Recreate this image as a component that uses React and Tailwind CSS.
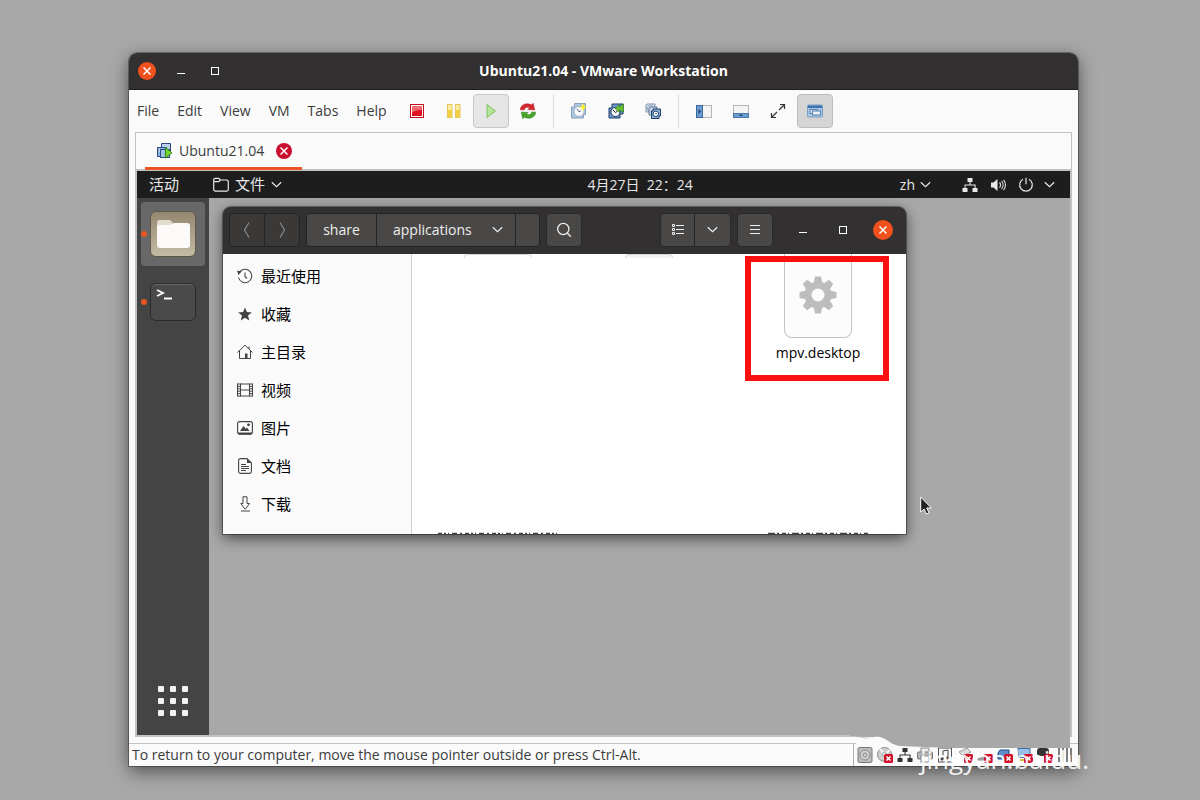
import { useState } from "react";

const menuItems = ["File", "Edit", "View", "VM", "Tabs", "Help"];

/* ---------- Shared glyphs ---------- */

const CloseGlyph = () => (
  <svg className="w-2 h-2" viewBox="0 0 8 8" stroke="white" strokeWidth="1.5" fill="none">
    <path d="M0.5 0.5l7 7M7.5 0.5l-7 7" />
  </svg>
);

const Chevron = () => (
  <svg className="w-[11px] h-[11px]" viewBox="0 0 11 11" stroke="currentColor" strokeWidth="1.2" fill="none">
    <path d="M0.8 3.2l4.7 4.4 4.7-4.4" />
  </svg>
);

const Badge = () => (
  <g>
    <rect x="7" y="7" width="9" height="9" rx="1.5" fill="#d01028" />
    <path d="M9.500 9.500l4 4M13.500 9.500l-4 4" stroke="#fff" strokeWidth="1.6" />
  </g>
);

/* ---------- Toolbar ---------- */

const toolGroups = [
  [
    {
      label: "Power off",
      icon: (
        <>
          <rect x="1.5" y="1.5" width="13" height="13" fill="#fff" stroke="#c4081c" />
          <rect x="3" y="3" width="10" height="10" fill="#e01022" />
          <path d="M3 3h10v3.5C9 7 6 7.500 3 9.500z" fill="#f26a70" />
        </>
      ),
    },
    {
      label: "Suspend",
      icon: (
        <>
          <rect x="1.500" y="1.500" width="4.500" height="13" fill="#f3d23f" stroke="#e6c562" />
          <rect x="9.500" y="1.500" width="4.500" height="13" fill="#f3d23f" stroke="#e6c562" />
          <path d="M2 2h3.500v5H2zM10 2h3.500v5H10z" fill="#fbeb9a" />
        </>
      ),
    },
    {
      label: "Start",
      pressed: "bg-[#e6e6e6] border-[#c6c6c6]",
      icon: <path d="M4 1.500L12.500 8 4 14.500z" fill="#b4e296" stroke="#7fc167" strokeLinejoin="round" />,
    },
    {
      label: "Restart",
      icon: (
        <>
          <path d="M.3 6.800C.5 2 6-.8 11.500 1.800L13.300.2l1.400 6.800-7-.5 1.900-1.700C7 3.700 4.500 4.500 4.200 7z" fill="#d8262c" stroke="#a8282c" strokeWidth="0.500" />
          <path d="M15.700 9.200C15.500 14 10 16.800 4.500 14.200l-1.800 1.600L1.300 9l7 .5-1.900 1.700c2.600 1.100 5.100.3 5.400-2.200z" fill="#46a62c" stroke="#387f26" strokeWidth="0.500" />
        </>
      ),
    },
  ],
  [
    {
      label: "Take snapshot",
      icon: (
        <>
          <path d="M3.500.5h11v11h-2v3.500H.5V4h3z" fill="#a9c6e2" stroke="#8aa0b8" />
          <circle cx="8" cy="8.500" r="5" fill="#f7fafc" stroke="#a3b4c5" />
          <path d="M6 6l2 2.800 2-1" stroke="#5e6c7a" fill="none" />
          <path d="M12 0l1 3 3 .8-2.700 1.400L12.500 8l-1.600-2.500L8 5l2.500-1.500z" fill="#fff02c" />
        </>
      ),
    },
    {
      label: "Revert snapshot",
      icon: (
        <>
          <path d="M4 1h11v10h-3v4H1V5h3z" fill="#6e9bd0" stroke="#1c3d68" />
          <circle cx="7.500" cy="9" r="4.600" fill="#eef3f7" stroke="#23395a" />
          <path d="M5 7l2.500 2.500L9.500 8" stroke="#222" fill="none" />
          <path d="M7 5.500l4.500-4V4l4-3v8l-4-2v2.500z" fill="#67bf31" stroke="#2d7c20" strokeWidth="0.700" />
        </>
      ),
    },
    {
      label: "Manage snapshots",
      icon: (
        <>
          <path d="M2 1h8v8H1V2z" fill="#dce7f2" stroke="#7c91ad" />
          <circle cx="5.500" cy="5.500" r="3" fill="#fff" stroke="#7c91ad" />
          <path d="M5 4h7v8H4V5z" fill="#c6d7ea" stroke="#5e7799" />
          <path d="M8 6h7.500v7H14v2.500H6.500V8H8z" fill="#8db0d8" stroke="#1c3d68" />
          <circle cx="10.800" cy="10.800" r="2.700" fill="#fff" stroke="#1c3d68" />
          <path d="M10 10l1 1 1-1" stroke="#1c3d68" strokeWidth="0.800" fill="none" />
        </>
      ),
    },
  ],
  [
    {
      label: "Show library",
      icon: (
        <>
          <rect x="0.500" y="2.500" width="15" height="12" fill="#f4f4f4" stroke="#b2b6bb" />
          <rect x="0.500" y="2.500" width="6" height="12" fill="#6b9bd1" stroke="#3c69a0" />
          <path d="M2.500 6l2.500 2.500-2.500 2.500z" fill="#1d4272" />
        </>
      ),
    },
    {
      label: "Show thumbnail bar",
      icon: (
        <>
          <rect x="0.500" y="2.500" width="15" height="12" fill="#f4f4f4" stroke="#b2b6bb" />
          <rect x="0.500" y="10.500" width="15" height="4" fill="#6b9bd1" stroke="#4c76a8" />
          <path d="M6 13l2-2 2 2z" fill="#1d4272" />
        </>
      ),
    },
    {
      label: "Full screen",
      icon: (
        <path d="M9 7l5-5M10 1.500h4.500V6M7 9l-5 5M1.500 10v4.500H6" stroke="#333" strokeWidth="1.200" fill="none" />
      ),
    },
    {
      label: "Unity",
      pressed: "bg-[#d5d5d5] border-[#bdbdbd]",
      icon: (
        <>
          <rect x="0.500" y="2" width="15" height="12" rx="1" fill="#a9c8e6" stroke="#7b9dc0" />
          <path d="M1 2.500h14v2.500H1z" fill="#3d71ac" />
          <rect x="3" y="6.500" width="7" height="4" fill="#dce9f5" stroke="#5580ae" />
          <rect x="5.500" y="8" width="8" height="4" fill="#eaf2f9" stroke="#5580ae" />
        </>
      ),
    },
  ],
];

const ToolButton = ({ label, pressed, icon }) => (
  <button
    aria-label={label}
    className={`w-9 h-[34px] rounded border flex items-center justify-center ${pressed || "border-transparent"}`}
  >
    <svg className="w-4 h-4" viewBox="0 0 16 16">{icon}</svg>
  </button>
);

const VmIcon = () => (
  <svg className="w-4 h-4" viewBox="0 0 16 16">
    <path d="M4.500.5h9v9h-9z" fill="#b9d0ec" stroke="#2a4a80" />
    <path d="M.5 4.500h9v9h-9z" fill="#8fb2de" stroke="#2a4a80" />
    <path d="M2 6h6v1H2zM2 8h6v1H2z" fill="#d7e5f5" />
    <rect x="3.500" y="6.500" width="9" height="8" fill="#9dbde4" stroke="#2a4a80" />
    <path d="M8.500 4.500l6.500 5.300-6.500 5.300z" fill="#78d52c" stroke="#2f8a1c" />
  </svg>
);

/* ---------- Files sidebar ---------- */

const places = [
  {
    name: "最近使用",
    icon: (
      <>
        <path d="M2.300 4.500A6.700 6.700 0 1 1 1.500 9.500M8 4.500v4l2 2" fill="none" stroke="currentColor" strokeWidth="1.100" />
        <path d="M0 2.800l4.800.5L1.500 7z" fill="currentColor" />
      </>
    ),
  },
  {
    name: "收藏",
    icon: <path d="M8 1.500l1.900 4.600 5 .3-3.900 3.200 1.300 4.900L8 11.800l-4.300 2.700L5 9.600 1.100 6.400l5-.3z" fill="currentColor" />,
  },
  {
    name: "主目录",
    icon: (
      <>
        <path d="M.5 8.500L8 1.200l7.500 7.300M2.500 7v7.500h11V7M12 5V2.500" fill="none" stroke="currentColor" />
        <path d="M8 9.500h2.500v5H8z" fill="currentColor" />
      </>
    ),
  },
  {
    name: "视频",
    icon: (
      <>
        <path d="M.5 1.500v13M15.500 1.500v13M3.500 1.500v13M12.500 1.500v13M3.500 2h9M3.500 8h9M3.500 14h9" fill="none" stroke="currentColor" />
        <path d="M.5 2h3M.5 4.400h3M.5 6.800h3M.5 9.200h3M.5 11.600h3M.5 14h3M12.500 2h3M12.500 4.400h3M12.500 6.800h3M12.500 9.200h3M12.500 11.600h3M12.500 14h3" stroke="currentColor" />
      </>
    ),
  },
  {
    name: "图片",
    icon: (
      <>
        <rect x=".6" y="1.600" width="14.800" height="12.500" rx="2" fill="none" stroke="currentColor" strokeWidth="1.100" />
        <path d="M1 12.500h14v.7l-1.500 1.300h-11L1 13.200zM3 11l3.500-5 2.300 2.800L10 7.500l2.500 3.500z" fill="currentColor" />
        <circle cx="11.500" cy="4.800" r="1.400" fill="currentColor" />
      </>
    ),
  },
  {
    name: "文档",
    icon: (
      <>
        <path d="M3.500.6H10l4.400 4.400v8.500a1.900 1.900 0 0 1-1.900 1.900h-9a1.900 1.900 0 0 1-1.900-1.900v-11A1.900 1.900 0 0 1 3.500.6z" fill="none" stroke="currentColor" strokeWidth="1.100" />
        <path d="M10 .6V5h4.400z" fill="currentColor" />
        <path d="M4 6.500h5M4 8.500h8M4 10.500h8M4 12.500h5" stroke="currentColor" />
      </>
    ),
  },
  {
    name: "下载",
    icon: <path d="M6 .8h4v6.700h2.500L8.500 13h-.7L3.800 7.500H6zM4 15h9" fill="none" stroke="currentColor" />,
  },
];

/* ---------- Status tray ---------- */

const devices = [
  {
    name: "Hard disk",
    icon: (
      <>
        <rect x="1" y="0.500" width="14" height="15" rx="1.500" fill="#bdbdbd" stroke="#777" />
        <circle cx="8" cy="8" r="5" fill="#d2d2d2" stroke="#888" />
        <circle cx="8" cy="8" r="2" fill="none" stroke="#888" />
      </>
    ),
  },
  {
    name: "CD/DVD",
    icon: (
      <>
        <circle cx="7.500" cy="7.500" r="7" fill="#cfcfcf" stroke="#8a8a8a" />
        <path d="M7.500 7.500L3 2M7.500 7.500L13 3" stroke="#f5f5f5" strokeWidth="2" />
        <circle cx="7.500" cy="7.500" r="2" fill="#fff" stroke="#999" />
        <Badge />
      </>
    ),
  },
  {
    name: "Network adapter",
    icon: <path d="M5.500 1h5v4H8.600v2.500h5V11H15.500v4h-5v-4h2V8.600h-9V11h2v4h-5v-4h2V7.500h5V5H5.500z" fill="#333" />,
  },
  {
    name: "Printer",
    icon: (
      <>
        <rect x="4" y="1" width="8" height="5" fill="#eee" stroke="#888" />
        <rect x="0.500" y="5" width="15" height="7" rx="1" fill="#b5b5b5" stroke="#777" />
        <rect x="4" y="9" width="8" height="6" fill="#fff" stroke="#888" />
      </>
    ),
  },
  {
    name: "Sound card",
    icon: (
      <>
        <rect x="1.500" y="1" width="13" height="14" fill="#f7f7f7" stroke="#555" />
        <path d="M6 12V4l5-1v8" fill="none" stroke="#444" />
        <circle cx="5" cy="12" r="1.500" fill="#444" />
        <circle cx="10" cy="11" r="1.500" fill="#444" />
      </>
    ),
  },
  { name: "Floppy", icon: <><path d="M2 5l8-4 4 4-8 4z" fill="#ddd" stroke="#999" /><Badge /></> },
  { name: "Serial port", icon: <><path d="M1 12l6-3 5 1v3H1z" fill="#aaa" stroke="#888" /><Badge /></> },
  { name: "USB device", icon: <><path d="M3 3h9v9H1V6z" fill="#5b8ecb" stroke="#234b80" /><Badge /></> },
  { name: "Display", icon: <><rect x="1" y="1.500" width="12" height="9" fill="#98c0e8" stroke="#43719f" /><path d="M3 12h8v2H3z" fill="#dfba38" /><Badge /></> },
  { name: "Camera", icon: <><rect x="0" y="1" width="12" height="8" rx="3" fill="#333" /><Badge /></> },
  { name: "Bluetooth", icon: <path d="M2 1v14M6 1v14M10 1v14M14 1v14" stroke="#555" strokeWidth="1.500" /> },
];

const WindowControls = () => (
  <>
    <button aria-label="Minimize" className="w-[34px] h-5 flex items-end justify-center pb-[7px]">
      <span className="w-2 h-px bg-white"></span>
    </button>
    <button aria-label="Maximize" className="w-[34px] h-5 flex items-center justify-center">
      <span className="w-2 h-2 border border-white"></span>
    </button>
  </>
);

const GuestTopBar = () => (
  <div className="h-[27px] shrink-0 bg-[#1d1d1d] text-[#e8e8e8] flex items-center pl-3 pr-[15px] text-[15px]">
    <button>活动</button>
    <button className="ml-[34px] flex items-center gap-1.5">
      <svg className="w-4 h-4" viewBox="0 0 16 16" fill="none" stroke="currentColor" strokeWidth="1.200">
        <path d="M.7 4.700V3A1.700 1.700 0 0 1 2.400 1.300h3.400L7.500 3h6a1.800 1.800 0 0 1 1.800 1.800v7.500a1.800 1.800 0 0 1-1.800 1.800h-11A1.800 1.800 0 0 1 .7 12.300V4.700h5L7.500 3" />
      </svg>
      <span>文件</span>
      <Chevron />
    </button>
    <time className="ml-auto mr-[207px] text-sm whitespace-pre">4月27日  22：24</time>
    <button className="flex items-center gap-[5px] text-sm">
      zh
      <Chevron />
    </button>
    <div className="flex items-center ml-[31px]">
      <svg className="w-4 h-4" viewBox="0 0 16 16" fill="currentColor">
        <path d="M5.500 1h5v4H8.600v2.500h5V11H15.500v4h-5v-4h2V8.600h-9V11h2v4h-5v-4h2V7.500h5V5H5.500z" />
      </svg>
      <svg className="w-4 h-4 ml-3" viewBox="0 0 16 16">
        <path d="M1 5.500h2.500L7.500 2v12L3.500 10.500H1z" fill="currentColor" />
        <path d="M9.500 5.500a3.500 3.500 0 0 1 0 5M11.500 4a6 6 0 0 1 0 8M13.500 2.800a8 8 0 0 1 0 10.400" fill="none" stroke="currentColor" strokeWidth="1.100" />
      </svg>
      <svg className="w-4 h-4 ml-3" viewBox="0 0 16 16" fill="none" stroke="currentColor" strokeWidth="1.200">
        <path d="M5 2.300a6.300 6.300 0 1 0 6 0M8 .8v6.500" />
      </svg>
      <span className="ml-2.5"><Chevron /></span>
    </div>
  </div>
);

const Dock = () => (
  <nav className="w-[72px] shrink-0 bg-[#444] flex flex-col items-center pt-1 pb-[19px]">
    <button aria-label="Files" className="relative w-16 h-16 rounded bg-[#686868] flex items-center justify-center">
      <span className="absolute left-0 w-1.5 h-1.5 rounded-full bg-[#e95420]"></span>
      <span className="w-[46px] h-[46px] rounded-md border border-[#5f574a] bg-gradient-to-b from-[#94886f] to-[#c5bca6] flex items-center justify-center">
        <svg className="w-[33px] h-[30px]" viewBox="0 0 33 30">
          <path d="M0 4q0-3 3-3h9q2 0 3 2l1 2h10v10H0z" fill="#e2dccf" />
          <path d="M0 9q0-3 3-3h10l4-2h13q3 0 3 3v19q0 3-3 3H3q-3 0-3-3z" fill="#fbfaf8" />
        </svg>
      </span>
    </button>
    <button aria-label="Terminal" className="relative w-16 h-[38px] mt-[17px] flex items-center justify-center">
      <span className="absolute left-0 w-1.5 h-1.5 rounded-full bg-[#e95420]"></span>
      <span className="w-[46px] h-[38px] rounded-md border border-[#2a2a2a] bg-[#4a4a4a] shadow-[inset_0_1px_0_#6a6a6a]">
        <svg className="w-full h-full" viewBox="0 0 44 36" fill="none" stroke="white" strokeWidth="1.800">
          <path d="M6 6l6 3-6 3M13 14.500h8" />
        </svg>
      </span>
    </button>
    <button aria-label="Show applications" className="mt-auto grid grid-cols-3 gap-1.5">
      {Array.from({ length: 9 }, (_, i) => (
        <span key={i} className="w-1.5 h-1.5 rounded-[1px] bg-[#f2f2f2]"></span>
      ))}
    </button>
  </nav>
);

const FilesWindow = () => {
  const [place, setPlace] = useState(null);

  return (
    <section className="absolute left-3.5 top-[9px] w-[683px] h-[327px] flex flex-col rounded-t-lg bg-[#323030] shadow-[0_4px_14px_rgba(0,0,0,0.6),0_0_0_1px_rgba(0,0,0,0.35)]">
      <header className="h-[47px] shrink-0 flex items-center px-1.5 pb-0.5 text-[#eee] text-sm">
        <div className="flex rounded border border-[#232323] divide-x divide-[#232323] bg-[#3a3938] text-[#8b8b8b]">
          <button aria-label="Back" className="w-[35px] h-8 flex items-center justify-center">
            <svg className="w-4 h-4" viewBox="0 0 16 16" fill="none" stroke="currentColor" strokeWidth="1.200"><path d="M10 .5L5.500 8l4.500 7.500" /></svg>
          </button>
          <button aria-label="Forward" className="w-[34px] h-8 flex items-center justify-center">
            <svg className="w-4 h-4" viewBox="0 0 16 16" fill="none" stroke="currentColor" strokeWidth="1.200"><path d="M6 .5L10.500 8 6 15.500" /></svg>
          </button>
        </div>
        <div className="ml-1.5 flex rounded border border-[#232323] divide-x divide-[#232323] bg-[#4a4846]">
          <button className="w-[70px] h-8">share</button>
          <button className="w-[139px] h-8 flex items-center justify-between pl-4 pr-3">
            applications
            <Chevron />
          </button>
          <span className="w-[23px]"></span>
        </div>
        <button aria-label="Search" className="ml-1.5 w-9 h-[34px] rounded border border-[#2a2929] bg-[#4a4846] flex items-center justify-center">
          <svg className="w-4 h-4" viewBox="0 0 16 16" fill="none" stroke="currentColor" strokeWidth="1.300">
            <circle cx="7.300" cy="7" r="5.600" />
            <path d="M11.300 11l3.500 3.700" />
          </svg>
        </button>
        <div className="ml-auto flex rounded border border-[#2a2929] divide-x divide-[#232323] bg-[#4a4846]">
          <button aria-label="List view" className="w-[34px] h-8 flex items-center justify-center">
            <svg className="w-3 h-3" viewBox="0 0 12 12" fill="none" stroke="currentColor">
              <path d="M.5.5h2v2h-2zM.5 4.500h2v2h-2zM.5 8.500h2v2h-2zM4 1.500h8M4 5.500h8M4 9.500h8" />
            </svg>
          </button>
          <button aria-label="View options" className="w-[35px] h-8 flex items-center justify-center">
            <Chevron />
          </button>
        </div>
        <button aria-label="Menu" className="ml-1.5 w-9 h-[34px] rounded border border-[#2a2929] bg-[#4a4846] flex items-center justify-center">
          <svg className="w-3 h-3" viewBox="0 0 12 12" stroke="currentColor"><path d="M1 1.500h10M1 5.500h10M1 9.500h10" /></svg>
        </button>
        <div className="ml-[13px] mr-[7px] flex items-center gap-1.5">
          <WindowControls />
          <button aria-label="Close" className="ml-[7px] w-5 h-5 rounded-full bg-[#f0511d] flex items-center justify-center">
            <CloseGlyph />
          </button>
        </div>
      </header>

      <div className="flex-1 flex min-h-0 bg-white">
        <aside className="w-[189px] shrink-0 bg-[#fafafa] border-r border-[#d0d0d0] pt-[3px]">
          {places.map(({ name, icon }) => (
            <button
              key={name}
              onClick={() => setPlace(name)}
              aria-pressed={place === name}
              className="w-full h-[38px] flex items-center gap-2 pl-3.5 text-[15px] text-black"
            >
              <svg className="w-4 h-4 text-[#444]" viewBox="0 0 16 16">{icon}</svg>
              {name}
            </button>
          ))}
        </aside>

        <div className="flex-1 flex flex-col justify-between">
          <div className="grid grid-cols-3 pl-1.5 pr-2 items-start">
            <div className="w-[68px] h-1 mx-auto rounded-t-md border-t border-x border-[#d6d6d6]"></div>
            <div className="w-12 h-1 ml-[47px] rounded-t-md border-t border-x border-[#d6d6d6] bg-[#f4f4f4]"></div>
            <figure className="relative flex flex-col items-center h-[127px]">
              <div className="w-[68px] h-[84px] shrink-0 rounded-b-lg border border-t-0 border-[#c4c4c4] bg-[#fcfcfc] flex items-center justify-center pb-0.5">
                <svg className="w-[38px] h-[38px]" viewBox="-19 -19 38 38" fill="#bdbdbd">
                  {[0, 45, 90, 135].map((deg) => (
                    <path key={deg} d="M-3-18.500h6l1.200 6v25l-1.200 6h-6l-1.200-6v-25z" transform={`rotate(${deg})`} />
                  ))}
                  <circle r="13.500" />
                  <circle r="6.500" fill="#fcfcfc" />
                </svg>
              </div>
              <figcaption className="mt-1 text-sm leading-[22px] text-black">mpv.desktop</figcaption>
              <span className="absolute left-[7px] right-[9px] top-0.5 bottom-0 border-6 border-[#fb1010]"></span>
            </figure>
          </div>
          <div className="flex justify-between pl-[26px] pr-[38px]">
            <svg className="w-[122px] h-0.5" viewBox="0 0 122 2" stroke="#444" strokeWidth="1.300" strokeDasharray="4 2 2 2 1 3 5 3 2 3"><path d="M0 1.300h122" /></svg>
            <svg className="w-[100px] h-0.5" viewBox="0 0 100 2" stroke="#444" strokeWidth="1.300" strokeDasharray="7 2 2 3 4 2 1 3"><path d="M0 1.300h100" /></svg>
          </div>
        </div>
      </div>
    </section>
  );
};

const App = () => {
  return (
    <main className="min-h-screen flex bg-[#a8a8a8] pt-[53px] pl-[129px] pr-[122px] pb-[34px] font-['Open_Sans','Noto_Sans_CJK_SC',sans-serif]">
      <div className="relative flex-1 flex flex-col rounded-t-lg bg-[#fafafa] shadow-[0_5px_18px_rgba(0,0,0,0.55),0_0_0_1px_rgba(0,0,0,0.3)]">
        {/* Title bar */}
        <header className="h-[37px] shrink-0 flex items-center rounded-t-lg bg-[#323030] border-b border-[#1f1f1f] pl-[9px] text-white">
          <button aria-label="Close" className="w-[18px] h-[18px] mr-2 rounded-full bg-[#f0511d] flex items-center justify-center">
            <CloseGlyph />
          </button>
          <WindowControls />
          <h1 className="flex-1 text-center text-sm font-bold pr-[103px]">Ubuntu21.04 - VMware Workstation</h1>
        </header>

        {/* Menu and toolbar */}
        <div className="h-[42px] shrink-0 flex items-center">
          <nav className="w-[270px] shrink-0 flex items-center gap-[18px] pl-2 text-sm text-[#3c3c3c]">
            {menuItems.map((item) => (
              <button key={item}>{item}</button>
            ))}
          </nav>
          <div className="flex items-center gap-px">
            {toolGroups.map((group, i) => (
              <div key={i} className="flex items-center gap-px">
                {i > 0 && <span className="w-px h-[34px] mx-1.5 bg-[#dcdcdc]"></span>}
                {group.map((tool) => (
                  <ToolButton key={tool.label} {...tool} />
                ))}
              </div>
            ))}
          </div>
        </div>

        {/* Tabs and guest screen */}
        <div className="flex-1 flex flex-col ml-1.5 mr-1.5 mb-1.5 border border-[#c2c2c2]">
          <div className="h-[38px] shrink-0 flex pl-[9px] border-b-2 border-[#c2c2c2]">
            <div className="w-[157px] h-[37px] flex items-center pl-3 pt-0.5 border-b-3 border-[#e95420] text-sm text-[#3c3c3c]">
              <VmIcon />
              <span className="ml-1.5 flex-1">Ubuntu21.04</span>
              <button aria-label="Close tab" className="w-4 h-4 mr-[10px] rounded-full bg-[#c8102e] flex items-center justify-center">
                <CloseGlyph />
              </button>
            </div>
          </div>
          <div className="flex-1 flex flex-col border-x border-b border-[#c2c2c2]">
            <GuestTopBar />
            <div className="flex-1 flex">
              <Dock />
              <div className="relative flex-1 bg-[#a8a8a8]">
                <FilesWindow />
                <svg className="absolute left-[711px] top-[298px] w-3 h-[19px]" viewBox="0 0 12 19">
                  <path d="M.7 1v15l3.400-3 2.300 5 2.600-1.100-2.300-4.900H11.300z" fill="#222" stroke="#fff" />
                </svg>
              </div>
            </div>
          </div>
        </div>

        {/* Status bar */}
        <footer className="h-[23px] shrink-0 flex items-center border-t border-[#c2c2c2] text-sm text-[#3c3c3c]">
          <p className="pl-[3px] flex-1">To return to your computer, move the mouse pointer outside or press Ctrl-Alt.</p>
          <div className="h-full flex items-center gap-1 pl-[3px] pr-[5px] border-l border-[#b0b0b0]">
            {devices.map(({ name, icon }) => (
              <svg key={name} className="w-4 h-4" viewBox="0 0 16 16" role="img" aria-label={name}>{icon}</svg>
            ))}
          </div>
        </footer>

        {/* Torn lower edge of the guest screen and the site mark */}
        <svg className="absolute right-2 bottom-[18px] w-[220px] h-[15px]" viewBox="0 0 220 15">
          <path d="M6 5L30 5L40 10L50 12L6 12z" fill="#fafafa" />
          <path d="M0 0h220v15H100l-50-2c-10-1-12-8-20-8-6 0-9 2-16 0-5-1-8-2-14-2z" fill="#a8a8a8" />
          <path d="M8 3c6 2 12 1 16 1 6-1 9 0 12 4H26z" fill="#fafafa" />
        </svg>
        <span className="absolute right-[-11px] -bottom-[9px] whitespace-nowrap text-[26px] leading-8 text-white/90">jingyan.baidu.</span>
      </div>
    </main>
  );
};

export default App;
